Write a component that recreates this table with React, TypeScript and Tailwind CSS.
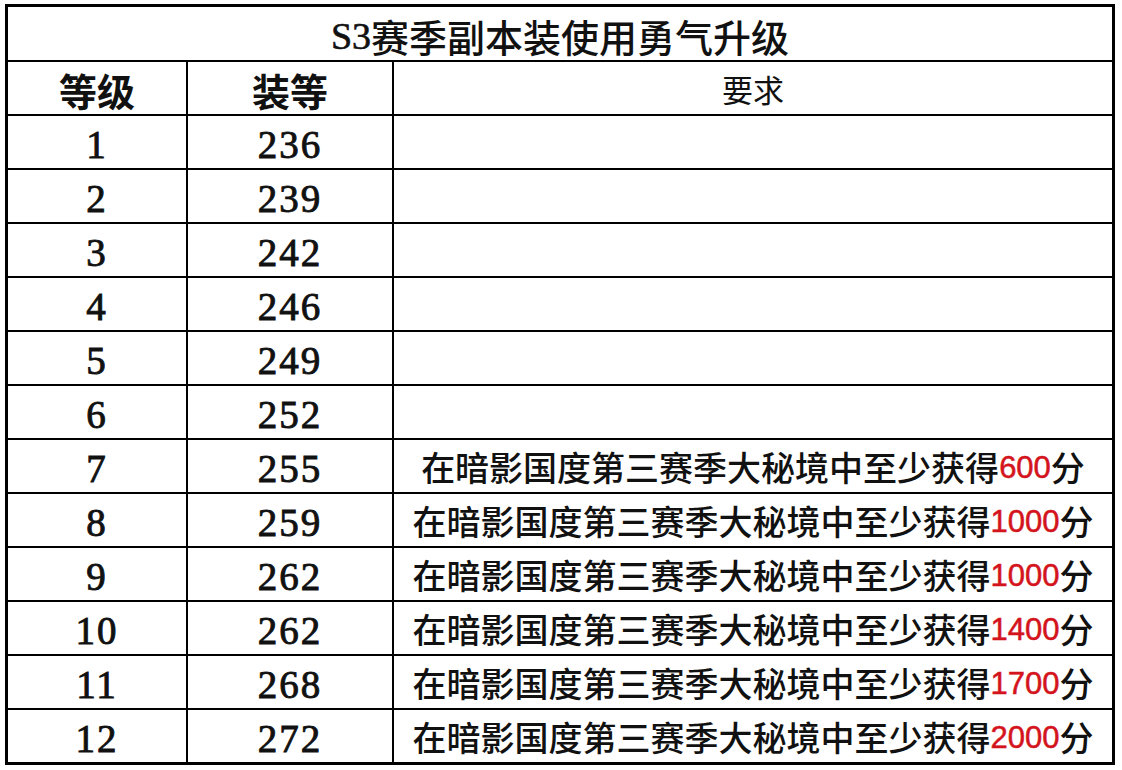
import * as React from "react";

// ─── Data ───────────────────────────────────────────────────────────────────

interface Tier {
  level: number;
  ilvl: number;
  score?: number;
}

const tiers: Tier[] = [
  { level: 1, ilvl: 236 },
  { level: 2, ilvl: 239 },
  { level: 3, ilvl: 242 },
  { level: 4, ilvl: 246 },
  { level: 5, ilvl: 249 },
  { level: 6, ilvl: 252 },
  { level: 7, ilvl: 255, score: 600 },
  { level: 8, ilvl: 259, score: 1000 },
  { level: 9, ilvl: 262, score: 1000 },
  { level: 10, ilvl: 262, score: 1400 },
  { level: 11, ilvl: 268, score: 1700 },
  { level: 12, ilvl: 272, score: 2000 },
];

const serif = "font-['Liberation_Serif','Noto_Sans_CJK_SC',serif]";
const cjk = "font-['Noto_Sans_CJK_SC',sans-serif]";

// ─── Cells ──────────────────────────────────────────────────────────────────

function NumCell({ children }: { children: React.ReactNode }) {
  return (
    <div
      className={`flex h-[52px] items-center justify-center bg-white pt-1 text-[39px] font-normal leading-none tracking-[2px] text-[#111] [-webkit-text-stroke:0.9px_#111] ${serif}`}
    >
      {children}
    </div>
  );
}

function Requirement({ score }: { score?: number }) {
  return (
    <div
      className={`flex h-[52px] items-center justify-center bg-white pt-0.5 text-[34px] font-medium leading-none text-[#111] ${cjk}`}
    >
      {score !== undefined && (
        <>
          在暗影国度第三赛季大秘境中至少获得
          <span className="font-['Liberation_Sans',sans-serif] text-[31px] font-normal text-[#d4141c] [-webkit-text-stroke:0.5px_#d4141c]">
            {score}
          </span>
          分
        </>
      )}
    </div>
  );
}

// ─── Page ───────────────────────────────────────────────────────────────────

export default function App() {
  return (
    <div className="h-[770px] w-[1122px] bg-white pl-[5px] pt-[4px]">
      <div className="w-[1110px] border-[3px] border-black bg-black">
        <div className="grid grid-cols-[178px_204px_1fr] gap-[2px]">
          {/* Title */}
          <div
            className={`col-span-3 flex h-[53px] items-center justify-center bg-white pt-1 text-[38px] font-medium leading-none text-[#111] ${cjk}`}
          >
            <span className={`${serif} font-normal [-webkit-text-stroke:0.6px_#111]`}>S3</span>
            赛季副本装使用勇气升级
          </div>

          {/* Header */}
          <div
            className={`flex h-[52px] items-center justify-center bg-white pt-1 text-[38px] font-bold leading-none text-[#111] ${cjk}`}
          >
            等级
          </div>
          <div
            className={`flex h-[52px] items-center justify-center bg-white pt-1 text-[38px] font-bold leading-none text-[#111] ${cjk}`}
          >
            装等
          </div>
          <div
            className={`flex h-[52px] items-center justify-center bg-white text-[31px] leading-none text-[#111] ${cjk}`}
          >
            要求
          </div>

          {/* Rows */}
          {tiers.map((t) => (
            <React.Fragment key={t.level}>
              <NumCell>{t.level}</NumCell>
              <NumCell>{t.ilvl}</NumCell>
              <Requirement score={t.score} />
            </React.Fragment>
          ))}
        </div>
      </div>
    </div>
  );
}
